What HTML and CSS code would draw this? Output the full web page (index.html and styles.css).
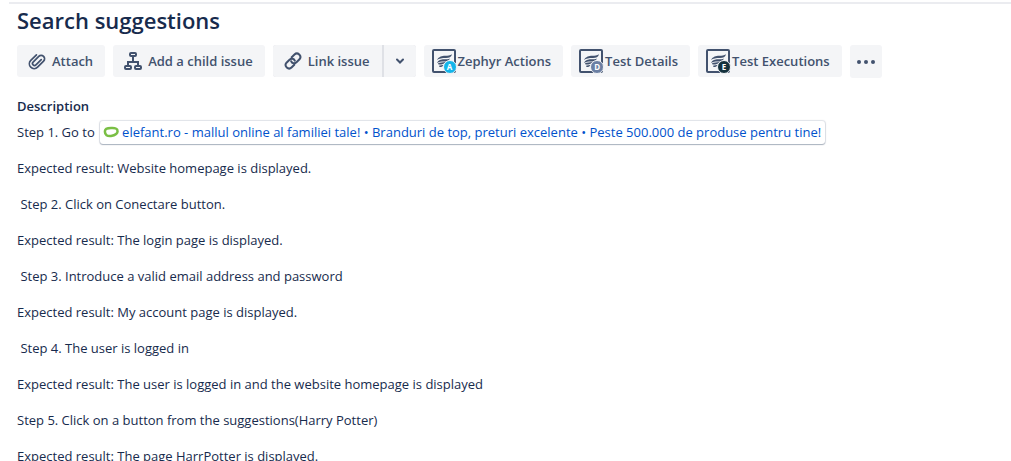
FILE: index.html
```html
<!DOCTYPE html>
<html lang="en">
<head>
<meta charset="utf-8">
<title>Search suggestions</title>
<link rel="stylesheet" href="styles.css">
</head>
<body>
<svg class="symbols" aria-hidden="true">
  <symbol id="zephyr" viewBox="0 0 24 24">
    <rect x="1" y="1" width="22" height="22" rx="1" fill="none" stroke="#42526e" stroke-width="2"/>
    <path d="M5 11C7 7.500 10 7 13 6.800C16 6.600 18 6.300 20 5.200C19.500 8 17 9 14 9C10 9 7 9.500 5 11Z" fill="#42526e"/>
    <path d="M5 14C6.500 10.800 9 10.500 12 10.300C14.500 10.200 16.500 10 18 9.400C17 12 14.500 12.400 12 12.400C9 12.400 7 12.500 5 14Z" fill="#42526e"/>
    <path d="M6 14.300C8 13.300 11 13.500 13.500 13C12.500 15.400 9 15.700 6.500 15.600Z" fill="#42526e"/>
    <path d="M7 16.800C8.500 16.300 10 16.400 11.500 16C10.800 17.800 9 18.200 7.500 18Z" fill="#42526e"/>
  </symbol>
</svg>
<main class="issue">
  <h1 class="issue-title">Search suggestions</h1>
  <div class="toolbar">
    <button class="button" type="button">
      <svg class="icon" viewBox="0 0 18 18"><path transform="rotate(45 9 9)" d="M11 5V12.500A2 2 0 0 1 7 12.500V4.500A3.300 3.300 0 0 1 13.800 4.500V13A4.800 4.800 0 0 1 4.200 13V5" fill="none" stroke="#42526e" stroke-width="1.700" stroke-linecap="round"/></svg>
      <span>Attach</span>
    </button>
    <button class="button" type="button">
      <svg class="icon" viewBox="0 0 18 18"><g fill="none" stroke="#42526e" stroke-width="2"><rect x="6" y="1" width="6" height="3" rx="1"/><rect x="1" y="14" width="6" height="3" rx="1"/><rect x="11" y="14" width="6" height="3" rx="1"/><path d="M9 4V9M4 14V10H14V14"/></g></svg>
      <span>Add a child issue</span>
    </button>
    <div class="split">
      <button class="button split-main" type="button">
        <svg class="icon" viewBox="0 0 18 18"><g fill="none" stroke="#42526e" stroke-width="2" stroke-linecap="round"><path d="M7.700 5.300L10.500 2.500C13.600 -.500 18.300 4 15.500 7.300L12.500 10.300C10.500 12 8 11.300 7.200 9.300"/><path d="M10.300 12.700L7.500 15.500C4.400 18.500 -.300 14 2.500 10.700L5.500 7.700C7.500 6 10 6.700 10.800 8.700"/></g></svg>
        <span>Link issue</span>
      </button>
      <button class="button split-toggle" type="button" aria-label="More link options">
        <svg class="chevron" viewBox="0 0 8 6"><path d="M1 1.500L4 4.500L7 1.500" fill="none" stroke="#42526e" stroke-width="2" stroke-linecap="round"/></svg>
      </button>
    </div>
    <button class="button app-button" type="button">
      <span class="app-icon"><svg class="app-art"><use href="#zephyr"/></svg><span class="badge badge-actions">A</span></span>
      <span>Zephyr Actions</span>
    </button>
    <button class="button app-button" type="button">
      <span class="app-icon"><svg class="app-art"><use href="#zephyr"/></svg><span class="badge badge-details">D</span></span>
      <span>Test Details</span>
    </button>
    <button class="button app-button" type="button">
      <span class="app-icon"><svg class="app-art"><use href="#zephyr"/></svg><span class="badge badge-executions">E</span></span>
      <span>Test Executions</span>
    </button>
    <button class="button more-button" type="button" aria-label="More actions">
      <svg class="icon" viewBox="0 0 18 18"><g fill="#42526e"><circle cx="2" cy="9" r="2"/><circle cx="9" cy="9" r="2"/><circle cx="16" cy="9" r="2"/></g></svg>
    </button>
  </div>
  <section class="description">
    <h2 class="description-title">Description</h2>
    <p class="step">Step 1. Go to <a class="smart-link" href="#"><svg class="favicon" viewBox="0 0 16 16"><path d="M2 7C1.500 11 4.500 12.500 8 12C12.500 11.500 15 9 14.500 6.500C14 3.500 10.500 4 8 4C5 4 2 4.500 2 7Z" fill="none" stroke="#7abf45" stroke-width="2.500"/></svg>elefant.ro - mallul online al familiei tale! • Branduri de top, preturi excelente • Peste 500.000 de produse pentru tine!</a></p>
    <p class="step">Expected result: Website homepage is displayed.</p>
    <p class="step">&nbsp;Step 2. Click on Conectare button.</p>
    <p class="step">Expected result: The login page is displayed.</p>
    <p class="step">&nbsp;Step 3. Introduce a valid email address and password</p>
    <p class="step">Expected result: My account page is displayed.</p>
    <p class="step">&nbsp;Step 4. The user is logged in</p>
    <p class="step">Expected result: The user is logged in and the website homepage is displayed</p>
    <p class="step">Step 5. Click on a button from the suggestions(Harry Potter)</p>
    <p class="step">Expected result: The page HarrPotter is displayed.</p>
  </section>
</main>
</body>
</html>
```
FILE: styles.css
```css
* { box-sizing: border-box; }
body {
  margin: 0;
  height: 100vh;
  overflow: hidden;
  background: #fff;
  color: #172b4d;
  font: 13px/24px "Segoe UI", "Open Sans", "Noto Sans", sans-serif;
}
.symbols { display: none; }
.issue {
  margin: 2px 0 0 9px;
  padding: 2px 8px 0;
  border-top: 2px solid #ebecf0;
}
.issue-title {
  margin: 0;
  font-size: 22px;
  line-height: 28px;
  font-weight: 600;
}
.toolbar {
  display: flex;
  align-items: flex-start;
  gap: 8px;
  margin-top: 11px;
}
.button {
  display: flex;
  align-items: center;
  gap: 6px;
  height: 32px;
  padding: 0 12px 0 11px;
  border: 0;
  border-radius: 3px;
  background: #f4f5f7;
  color: #42526e;
  font: inherit;
  font-weight: 600;
  line-height: 32px;
  white-space: nowrap;
}
.icon { width: 18px; height: 18px; flex: none; }
.split { display: flex; gap: 2px; background: #dfe1e6; border-radius: 3px; }
.split-main { border-radius: 3px 0 0 3px; }
.split-toggle {
  justify-content: center;
  width: 32px;
  padding: 0;
  border-radius: 0 3px 3px 0;
}
.chevron { width: 8px; height: 6px; }
.app-button { gap: 2px; padding: 0 12px 0 8px; }
.app-icon { position: relative; width: 24px; height: 24px; }
.app-art { display: block; width: 24px; height: 24px; }
.badge {
  position: absolute;
  right: -1px;
  bottom: -1px;
  width: 14px;
  height: 14px;
  border: 1px solid #f4f5f7;
  border-radius: 50%;
  color: #fff;
  font-size: 8px;
  font-weight: 700;
  line-height: 12px;
  text-align: center;
}
.badge-actions { background: #13b5ea; }
.badge-details { background: #6b7fa3; }
.badge-executions { background: #14313d; }
.more-button { justify-content: center; width: 32px; height: 33px; padding: 0; }
.description { margin-top: 19px; }
.description-title {
  margin: 0;
  font-size: 13px;
  line-height: 18px;
  font-weight: 600;
}
.step { margin: 0 0 12px; white-space: nowrap; }
.description-title + .step { margin-top: 5px; }
.smart-link {
  margin-left: 2px;
  padding: 2px 4px 3px 3px;
  border-radius: 3px;
  box-shadow: 0 1px 1px rgba(9, 30, 66, .25), 0 0 1px 1px rgba(9, 30, 66, .13);
  color: #0052cc;
  text-decoration: none;
}
.favicon { width: 16px; height: 16px; margin-right: 3px; vertical-align: -3px; }
```
